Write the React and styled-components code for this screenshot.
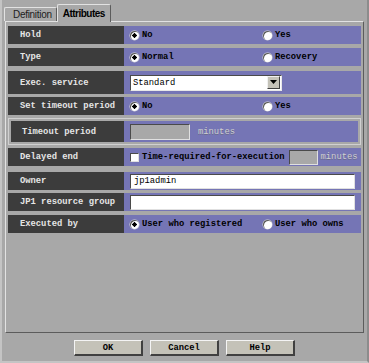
import styled, { createGlobalStyle } from 'styled-components';

const GlobalStyle = createGlobalStyle`
  html, body {
    margin: 0;
    padding: 0;
    background: #a8a8a8;
  }
  * {
    box-sizing: border-box;
  }
`;

const Window = styled.div`
  width: 369px;
  height: 363px;
  background: #a8a8a8;
  padding: 4px 3px 0 3px;
  display: flex;
  flex-direction: column;
  border-left: 2px solid #c4c4c4;
  border-right: 2px solid #8c8c8c;
  border-bottom: 2px solid #c4c4c4;
  font-family: 'Liberation Mono', 'DejaVu Sans Mono', monospace;
`;

const TabBar = styled.div`
  display: flex;
  align-items: flex-end;
  height: 17px;
  margin-left: -1px;
`;

const Tab = styled.div`
  height: ${p => (p.active ? '18px' : '14px')};
  margin-bottom: ${p => (p.active ? '-1px' : '0')};
  padding: 0 ${p => (p.active ? '5px' : '4px')} 0 ${p => (p.active ? '5px' : '8px')};
  display: flex;
  align-items: center;
  font-family: 'Liberation Sans', Arial, sans-serif;
  font-size: 10px;
  letter-spacing: ${p => (p.active ? '-0.5px' : '-0.3px')};
  font-weight: ${p => (p.active ? 700 : 400)};
  color: ${p => (p.active ? '#000' : '#202020')};
  background: #a8a8a8;
  border-top: 1px solid #e2e2e2;
  border-left: 1px solid #e2e2e2;
  border-right: 1px solid #5c5c5c;
  border-top-left-radius: 2px;
  border-top-right-radius: 2px;
  position: relative;
  z-index: ${p => (p.active ? 2 : 1)};
`;

const Panel = styled.div`
  height: 312px;
  border-top: 1px solid #e2e2e2;
  border-left: 1px solid #e2e2e2;
  border-right: 1px solid #5c5c5c;
  border-bottom: 1px solid #5c5c5c;
  padding: 4px 2px 0 2px;
  display: flex;
  flex-direction: column;
`;

const Row = styled.div`
  display: grid;
  grid-template-columns: ${p => p.labelWidth || 116}px minmax(0, 1fr);
  height: ${p => p.h || 18}px;
  margin-top: ${p => p.gap ?? 3}px;
  &:first-child {
    margin-top: 0;
  }
`;

const Label = styled.div`
  background: #3c3c3c;
  color: #e6e6e6;
  font-size: 8.8px;
  font-weight: 700;
  display: flex;
  align-items: center;
  padding-left: ${p => p.indent || 12}px;
  white-space: nowrap;
`;

const Value = styled.div`
  background: #7575b5;
  display: flex;
  align-items: center;
  padding-left: 6px;
  font-size: 8.8px;
  font-weight: 700;
  color: #000;
  white-space: nowrap;
  overflow: hidden;
`;

const Frame = styled.div`
  margin-top: 3px;
  height: 27px;
  border: 1px solid #d0d0d0;
  padding: 2px;
  display: flex;
  flex-direction: column;
`;

const RadioGroup = styled.div`
  display: grid;
  grid-template-columns: 133px auto;
  align-items: center;
`;

const Option = styled.label`
  display: flex;
  align-items: center;
  gap: 3px;
`;

const Radio = styled.span`
  width: 9px;
  height: 9px;
  border-radius: 50%;
  background: ${p =>
    p.checked
      ? 'radial-gradient(circle, #000 0 2px, #fff 2.3px)'
      : '#fff'};
  box-shadow: inset 1px 1px 0 #5a5a5a, 0 0 0 0.5px #d8d8d8;
  flex: none;
`;

const CheckBox = styled.span`
  width: 9px;
  height: 9px;
  background: #fff;
  border-top: 1px solid #4a4a4a;
  border-left: 1px solid #4a4a4a;
  border-right: 1px solid #e0e0e0;
  border-bottom: 1px solid #e0e0e0;
  flex: none;
  margin-right: 3px;
`;

const Select = styled.div`
  width: 152px;
  height: 16px;
  background: #fff;
  border-top: 1px solid #4a4a4a;
  border-left: 1px solid #4a4a4a;
  border-right: 1px solid #e8e8e8;
  border-bottom: 1px solid #e8e8e8;
  display: flex;
  align-items: center;
  justify-content: space-between;
  padding-left: 2px;
  font-weight: 400;
`;

const SelectButton = styled.span`
  width: 13px;
  height: 13px;
  margin-right: 1px;
  background: #c4c2b8;
  border-top: 1px solid #f0f0f0;
  border-left: 1px solid #f0f0f0;
  border-right: 1px solid #404040;
  border-bottom: 1px solid #404040;
  display: flex;
  align-items: center;
  justify-content: center;
`;

const Field = styled.div`
  width: ${p => p.w}px;
  height: ${p => p.h || 15}px;
  margin-left: ${p => p.ml || 0}px;
  background: ${p => (p.disabled ? '#a8a8a8' : '#fff')};
  border-top: 1px solid #4a4a4a;
  border-left: 1px solid #4a4a4a;
  border-right: 1px solid #e0e0e0;
  border-bottom: 1px solid #e0e0e0;
  display: flex;
  align-items: center;
  padding-left: 3px;
  font-weight: 400;
  flex: none;
`;

const Unit = styled.span`
  margin-left: ${p => p.ml || 8}px;
  color: #cfcfcf;
  font-weight: 400;
  text-shadow: 0 1px 0 #6a6a8a;
`;

const ButtonBar = styled.div`
  display: flex;
  justify-content: center;
  gap: 7px;
  margin-top: 7px;
`;

const Button = styled.button`
  width: 69px;
  height: 16px;
  background: #c4c2b8;
  border-top: 1px solid #f4f4f4;
  border-left: 1px solid #f4f4f4;
  border-right: 2px solid #404040;
  border-bottom: 2px solid #404040;
  font-family: 'Liberation Mono', monospace;
  font-size: 8.8px;
  font-weight: 700;
  color: #000;
  padding: 0;
  display: flex;
  align-items: center;
  justify-content: center;
`;

const RadioPair = ({ left, right, checked = 0 }) => (
  <RadioGroup>
    <Option>
      <Radio checked={checked === 0} />
      {left}
    </Option>
    <Option>
      <Radio checked={checked === 1} />
      {right}
    </Option>
  </RadioGroup>
);

export default function App() {
  return (
    <>
      <GlobalStyle />
      <Window>
        <TabBar>
          <Tab>Definition</Tab>
          <Tab active>Attributes</Tab>
        </TabBar>
        <Panel>
          <Row>
            <Label>Hold</Label>
            <Value>
              <RadioPair left="No" right="Yes" />
            </Value>
          </Row>
          <Row gap={4}>
            <Label>Type</Label>
            <Value>
              <RadioPair left="Normal" right="Recovery" />
            </Value>
          </Row>
          <Row gap={5} h={23}>
            <Label>Exec. service</Label>
            <Value>
              <Select>
                Standard
                <SelectButton>
                  <svg width="7" height="5" viewBox="0 0 7 5">
                    <path d="M0 0h7L3.5 4z" fill="#000" />
                  </svg>
                </SelectButton>
              </Select>
            </Value>
          </Row>
          <Row gap={3}>
            <Label>Set timeout period</Label>
            <Value>
              <RadioPair left="No" right="Yes" />
            </Value>
          </Row>
          <Frame>
            <Row labelWidth={113} h={21}>
              <Label indent={11}>Timeout period</Label>
              <Value>
                <Field w={60} h={16} disabled />
                <Unit>minutes</Unit>
              </Value>
            </Row>
          </Frame>
          <Row gap={3}>
            <Label>Delayed end</Label>
            <Value>
              <CheckBox />
              Time-required-for-execution
              <Field w={29} h={15} ml={4} disabled />
              <Unit ml={3}>minutes</Unit>
            </Value>
          </Row>
          <Row gap={6}>
            <Label>Owner</Label>
            <Value>
              <Field w={225}>jp1admin</Field>
            </Value>
          </Row>
          <Row gap={3}>
            <Label>JP1 resource group</Label>
            <Value>
              <Field w={225} />
            </Value>
          </Row>
          <Row gap={4}>
            <Label>Executed by</Label>
            <Value>
              <RadioPair left="User who registered" right="User who owns" />
            </Value>
          </Row>
        </Panel>
        <ButtonBar>
          <Button>OK</Button>
          <Button>Cancel</Button>
          <Button>Help</Button>
        </ButtonBar>
      </Window>
    </>
  );
}
